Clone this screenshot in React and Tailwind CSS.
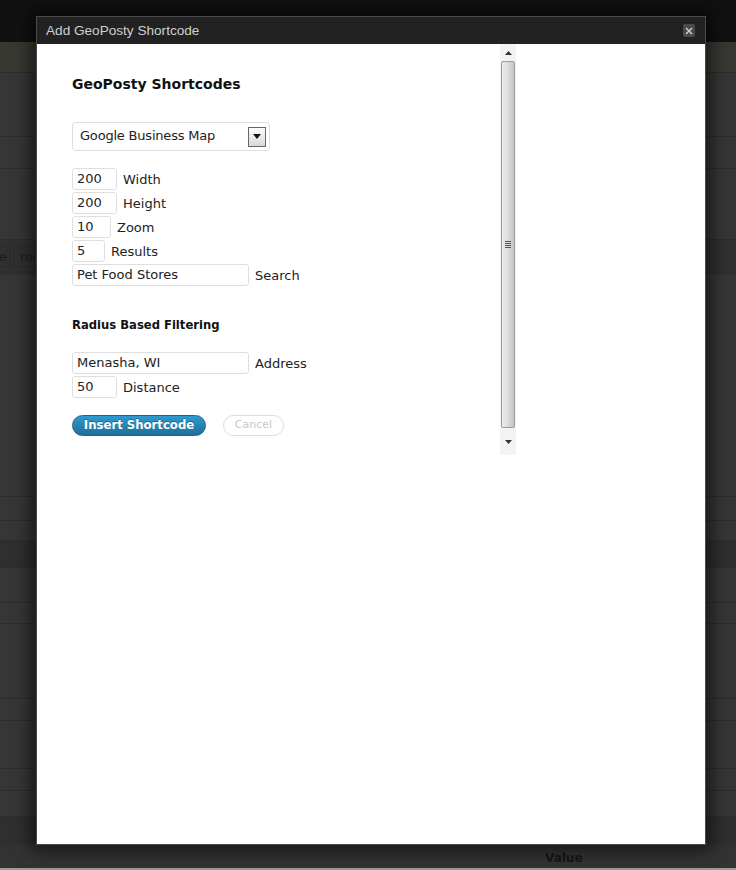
import React from "react";

function Row({ h, cls = "" }) {
  return <div className={`w-full shrink-0 border-b border-[#2c2c2c] ${cls}`} style={{ height: h }} />;
}

export default function App() {
  const verdana = { fontFamily: '"DejaVu Sans", Verdana, sans-serif' };
  const field = (v, l, w) => (
    <div key={l} className="flex items-center">
      <div className="h-[22px] rounded-[3px] border border-[#dfdfdf] text-[13px] text-[#222] pl-[4px] flex items-center" style={{ width: w }}>{v}</div>
      <span className="ml-[6px] text-[13px] text-[#222] leading-[16px] translate-y-[1px]">{l}</span>
    </div>
  );
  return (
    <div className="relative w-[736px] h-[870px] overflow-hidden bg-[#363636]">
      {/* background page under overlay */}
      <div className="flex flex-col w-full h-full">
        <div className="h-[42px] bg-[#111111] shrink-0" />
        <div className="h-[31px] bg-[#383833] shrink-0 border-b border-[#2c2c2c]" />
        <Row h={64} />
        <Row h={32} />
        <Row h={71} />
        <div className="h-[33px] shrink-0 bg-[#303030] flex items-center gap-[3px] -ml-[24px]">
          <div className="h-[21px] w-[34px] rounded-[3px] border border-[#2a2a2a] text-[#1d1d1d] text-[13px] flex items-center justify-end pr-[2px]" style={verdana}>e</div>
          <div className="h-[21px] w-[40px] rounded-[3px] border border-[#2a2a2a] text-[#1d1d1d] text-[13px] flex items-center pl-[6px]" style={verdana}>mo</div>
        </div>
        <Row h={224} cls="border-t border-t-[#2c2c2c]" />
        <Row h={24} />
        <Row h={20} />
        <Row h={27} cls="bg-[#2f2f2f]" />
        <Row h={35} />
        <Row h={21} />
        <Row h={75} />
        <Row h={22} />
        <Row h={48} />
        <Row h={22} />
        <Row h={26} />
        <div className="h-[28px] shrink-0 bg-[#2f2f2f]" />
        <div className="h-[23px] shrink-0 bg-[#333333] flex items-center">
          <span className="ml-[545px] translate-y-[1px] text-[12px] font-bold text-[#161616]" style={verdana}>Value</span>
        </div>
        <div className="h-[2px] shrink-0 bg-[#9a9a9a]" />
      </div>

      {/* modal */}
      <div className="absolute left-[36px] top-[16px] w-[670px] h-[829px] bg-white border border-[#4a4a4a] shadow-[0_0_16px_6px_rgba(0,0,0,0.55)] flex flex-col">
        <div className="h-[27px] bg-[#222222] flex items-center justify-between pl-[9px] pr-[10px] shrink-0">
          <span className="text-[13.6px] text-[#cfcfcf] translate-y-[1px]" style={{ fontFamily: '"Liberation Sans", Arial, sans-serif' }}>Add GeoPosty Shortcode</span>
          <div className="w-[12px] h-[13px] rounded-[2px] bg-[#4a4a4a] flex items-center justify-center">
            <svg width="8" height="8" viewBox="0 0 8 8"><path d="M1 1L7 7M7 1L1 7" stroke="#d8d8d8" strokeWidth="1.3" /></svg>
          </div>
        </div>
        <div className="flex">
          <div className="w-[463px] h-[411px] pl-[35px] pt-[31px]" style={verdana}>
            <h2 className="text-[14px] font-bold text-[#111] leading-[18px]">GeoPosty Shortcodes</h2>
            <div className="mt-[29px] w-[198px] h-[29px] rounded-[4px] border border-[#dfdfdf] flex items-center justify-between pl-[7px] pr-[3px]">
              <span className="text-[13px] tracking-[-0.2px] text-[#222] -translate-y-[1px]">Google Business Map</span>
              <div className="w-[18px] h-[20px] border border-[#666] bg-gradient-to-b from-[#fdfdfd] to-[#d8d8d8] flex items-center justify-center">
                <svg width="8" height="5" viewBox="0 0 8 5"><path d="M0 0H8L4 5Z" fill="#111" /></svg>
              </div>
            </div>
            <div className="mt-[17px] flex flex-col gap-[2px]">
              {field("200", "Width", 45)}
              {field("200", "Height", 45)}
              {field("10", "Zoom", 39)}
              {field("5", "Results", 33)}
              {field("Pet Food Stores", "Search", 177)}
            </div>
            <h3 className="mt-[32px] text-[11.6px] font-bold text-[#111] leading-[15px]">Radius Based Filtering</h3>
            <div className="mt-[19px] flex flex-col gap-[2px]">
              {field("Menasha, WI", "Address", 177)}
              {field("50", "Distance", 45)}
            </div>
            <div className="mt-[17px] flex items-center gap-[17px]">
              <div className="w-[134px] h-[21px] rounded-full border border-[#1e6488] bg-gradient-to-b from-[#2f9ad0] to-[#1f6f97] text-white text-[11.7px] font-bold flex items-center justify-center [text-shadow:0_-1px_0_rgba(0,0,0,0.3)]">Insert Shortcode</div>
              <div className="w-[61px] h-[21px] rounded-full border border-[#dcdcdc] text-[#c8c8c8] text-[11px] flex items-center justify-center">Cancel</div>
            </div>
          </div>
          {/* scrollbar */}
          <div className="w-[16px] h-[411px] bg-[#f3f3f3] flex flex-col items-center">
            <div className="h-[17px] flex items-center justify-center">
              <svg width="7" height="4" viewBox="0 0 7 4"><path d="M0 4H7L3.5 0Z" fill="#333" /></svg>
            </div>
            <div className="w-[14px] h-[367px] rounded-[2px] border border-[#9a9a9a] bg-gradient-to-r from-[#ececec] via-[#dcdcdc] to-[#c4c4c4] flex items-center justify-center">
              <div className="flex flex-col gap-[1px]">
                <div className="w-[6px] h-[1px] bg-[#555]" />
                <div className="w-[6px] h-[1px] bg-[#555]" />
                <div className="w-[6px] h-[1px] bg-[#555]" />
                <div className="w-[6px] h-[1px] bg-[#555]" />
              </div>
            </div>
            <div className="flex-1 flex items-center justify-center">
              <svg width="7" height="4" viewBox="0 0 7 4"><path d="M0 0H7L3.5 4Z" fill="#333" /></svg>
            </div>
          </div>
        </div>
      </div>
    </div>
  );
}
